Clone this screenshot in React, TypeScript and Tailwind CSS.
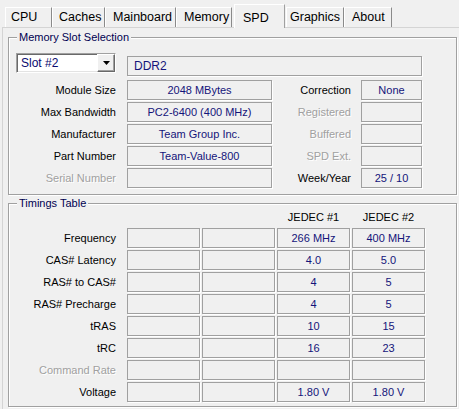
// CPU-Z style SPD tab

const tabs = [
  { name: 'CPU', cls: 'w-[47px] pl-[5px]' },
  { name: 'Caches', cls: 'w-[53px] pl-[6px]' },
  { name: 'Mainboard', cls: 'w-[71px] pl-[7px]' },
  { name: 'Memory', cls: 'w-[56px] pl-[7px]' },
  { name: 'SPD', cls: 'w-[51px] ml-[2px] pl-[8px]', active: true },
  { name: 'Graphics', cls: 'w-[58px] ml-px pl-[3px]' },
  { name: 'About', cls: 'w-[48px] pl-[7px]' },
];

const slotRows = [
  { label: 'Module Size', value: '2048 MBytes', rLabel: 'Correction', rValue: 'None' },
  { label: 'Max Bandwidth', value: 'PC2-6400 (400 MHz)', rLabel: 'Registered', rDim: true },
  { label: 'Manufacturer', value: 'Team Group Inc.', rLabel: 'Buffered', rDim: true },
  { label: 'Part Number', value: 'Team-Value-800', rLabel: 'SPD Ext.', rDim: true },
  { label: 'Serial Number', dim: true, rLabel: 'Week/Year', rValue: '25 / 10' },
];

const timingRows = [
  { label: 'Frequency', j1: '266 MHz', j2: '400 MHz' },
  { label: 'CAS# Latency', j1: '4.0', j2: '5.0' },
  { label: 'RAS# to CAS#', j1: '4', j2: '5' },
  { label: 'RAS# Precharge', j1: '4', j2: '5' },
  { label: 'tRAS', j1: '10', j2: '15' },
  { label: 'tRC', j1: '16', j2: '23' },
  { label: 'Command Rate', dim: true, j1: '', j2: '' },
  { label: 'Voltage', j1: '1.80 V', j2: '1.80 V' },
];

function Label({ text, dim, className }: { text: string; dim?: boolean; className: string }) {
  return (
    <div
      className={`${className} text-right whitespace-nowrap ${
        dim ? 'text-[#a0a0a0] [text-shadow:1px_1px_0_#fff]' : 'text-black'
      }`}
    >
      {text}
    </div>
  );
}

function Field({ value, className }: { value?: string; className: string }) {
  return (
    <div
      className={`${className} h-[20px] border border-[#a0a0a0] shadow-[1px_1px_0_#fff] flex items-center justify-center text-[#14147a] whitespace-nowrap`}
    >
      {value}
    </div>
  );
}

function Group({ title, className, children }: { title: string; className: string; children: React.ReactNode }) {
  return (
    <div className={`relative ml-[5px] w-[449px] border border-[#a0a0a0] shadow-[inset_1px_1px_0_#fff,1px_1px_0_#fff] ${className}`}>
      <span className="absolute left-[8px] top-[-8px] px-[2px] bg-[#f0f0f0] text-[#000050] leading-[14px]">
        {title}
      </span>
      {children}
    </div>
  );
}

export default function App() {
  return (
    <div className="w-[459px] h-[409px] bg-[#f0f0f0] overflow-hidden font-['Liberation_Sans',Arial,sans-serif] text-[11px]">
      {/* tab strip */}
      <div className="relative z-10 flex items-end h-[27px] pl-[5px] text-[12.5px]">
        {tabs.map((t) =>
          t.active ? (
            <div
              key={t.name}
              className={`${t.cls} h-[24px] -mb-px bg-[#f0f0f0] border-l border-t border-white border-r border-r-[#a0a0a0] flex items-start pt-[4px]`}
            >
              {t.name}
            </div>
          ) : (
            <div
              key={t.name}
              className={`${t.cls} h-[20px] bg-[#f0f0f0] border-l border-t border-white border-r border-r-[#8a8a8a] flex items-center`}
            >
              {t.name}
            </div>
          )
        )}
      </div>

      {/* tab page */}
      <div className="ml-[2px] h-[382px] border-l border-t border-[#d4d4d4] pt-[9px]">
        <Group title="Memory Slot Selection" className="h-[158px]">
          <div className="flex items-start pt-[15px] pl-[7px]">
            <div className="w-[100px] h-[20px] bg-white border border-t-[#a0a0a0] border-l-[#a0a0a0] border-r-white border-b-white shadow-[inset_1px_1px_0_#696969,inset_-1px_-1px_0_#e3e3e3] flex items-center">
              <span className="flex-1 pl-[4px] text-[12px] text-[#0a0a70]">Slot #2</span>
              <div className="w-[18px] h-[18px] bg-[#f0f0f0] border border-t-white border-l-white border-r-[#696969] border-b-[#696969] shadow-[inset_-1px_-1px_0_#a0a0a0] flex items-center justify-center">
                <svg width="7" height="4" viewBox="0 0 7 4">
                  <path d="M0 0h7L3.5 4z" fill="#000" />
                </svg>
              </div>
            </div>
            <div className="ml-[11px] mt-[3px] w-[295px] h-[20px] border border-[#a0a0a0] shadow-[1px_1px_0_#fff] flex items-center pl-[6px] text-[12px] text-[#14147a]">
              DDR2
            </div>
          </div>

          <div className="flex flex-col gap-[2px] mt-[4px]">
            {slotRows.map((r) => (
              <div key={r.label} className="flex items-center h-[20px]">
                <Label text={r.label} dim={r.dim} className="w-[107px]" />
                <Field value={r.value} className="ml-[11px] w-[145px]" />
                <Label text={r.rLabel} dim={r.rDim} className="w-[79px]" />
                <Field value={r.rValue} className="ml-[10px] w-[61px]" />
              </div>
            ))}
          </div>
        </Group>

        <Group title="Timings Table" className="mt-[8px] h-[204px]">
          <div className="flex items-center h-[14px] mt-[6px] text-black">
            <div className="w-[107px]" />
            <div className="ml-[11px] w-[73px]" />
            <div className="ml-[2px] w-[73px]" />
            <div className="ml-[2px] w-[73px] text-center">JEDEC #1</div>
            <div className="ml-[2px] w-[73px] text-center">JEDEC #2</div>
          </div>
          <div className="flex flex-col gap-[2px] mt-[4px]">
            {timingRows.map((r) => (
              <div key={r.label} className="flex items-center h-[20px]">
                <Label text={r.label} dim={r.dim} className="w-[107px]" />
                <Field className="ml-[11px] w-[73px]" />
                <Field className="ml-[2px] w-[73px]" />
                <Field value={r.j1} className="ml-[2px] w-[73px]" />
                <Field value={r.j2} className="ml-[2px] w-[73px]" />
              </div>
            ))}
          </div>
        </Group>
      </div>
    </div>
  );
}
